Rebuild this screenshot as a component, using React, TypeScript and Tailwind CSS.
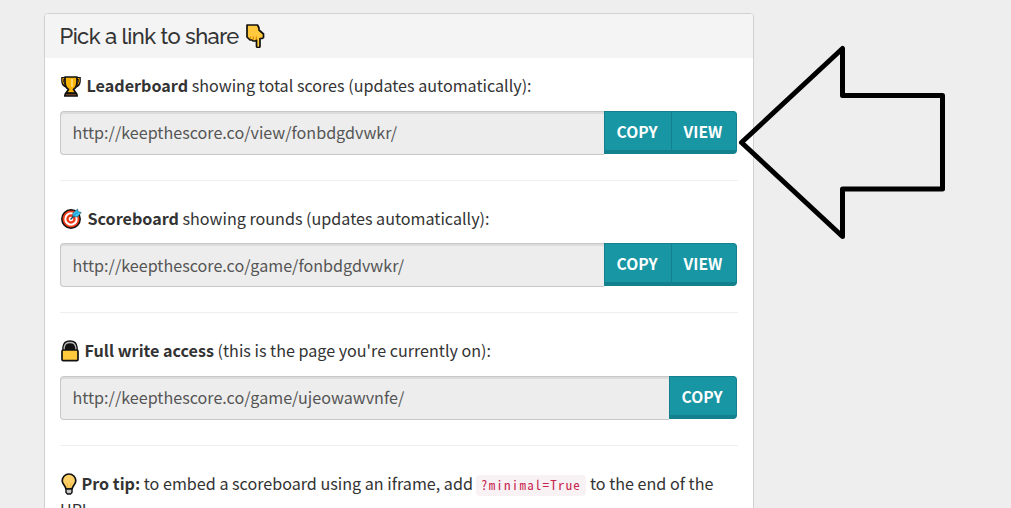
import type { ReactNode } from "react";

const outline = { stroke: "#111", strokeWidth: 1.7, strokeLinejoin: "round" as const };

function PointDown() {
  return (
    <svg className="ml-[7px] h-6 w-[19px] shrink-0" viewBox="0 0 19 24">
      <path d="M1 1h10.500l1.500 3v2l4.500 4v3.500L16 14.500h-2v8q-.3 1-1.200 1h-1q-1.300-.2-1.300-1.500V16l-1 1H7l-1-1H4L2.500 14.500 1 13z" fill="#ffc83d" {...outline} />
      <path d="M4.300 12.500v2.500M7.300 12.500v3.200M10.300 12.500v3" stroke="#d67d00" strokeWidth="1" fill="none" />
    </svg>
  );
}

function Trophy() {
  return (
    <svg className="ml-px h-[21px] w-5 shrink-0" viewBox="0 0 20 21">
      <path d="M5 2.500H1.700v3Q2 9.500 6 10.500M15 2.500h3.300v3Q18 9.500 14 10.500" fill="none" stroke="#111" strokeWidth="3" />
      <path d="M5 2.500H1.800v3Q2 9 6 9.800M15 2.500h3.200v3Q18 9 14 9.800" fill="none" stroke="#f7a900" strokeWidth="1" />
      <path d="M4 1h12v5q0 5-3.500 7.500L15 17H5l2.500-3.500Q4 11 4 6z" fill="#f9b406" {...outline} />
      <path d="M11 3v8" stroke="#ffdc70" strokeWidth="1.800" />
      <path d="M4.500 17.500h11l.7 2.500H3.800z" fill="#8b4d2c" {...outline} />
    </svg>
  );
}

function Target() {
  return (
    <svg className="ml-px h-[21px] w-[21px] shrink-0" viewBox="0 0 21 21">
      <circle cx="10" cy="11" r="9.200" fill="#f03a17" stroke="#111" strokeWidth="1.500" />
      <circle cx="10" cy="11" r="5.700" fill="none" stroke="#fff" strokeWidth="2" />
      <circle cx="10" cy="11" r="2.300" fill="#fff" />
      <path d="M9.500 11.500L15 6" stroke="#18445c" strokeWidth="1.500" />
      <path d="M11.500 8.500L12 5l4.500-4 .7 2.700 3 .8-3.700 4.500z" fill="#36c4f2" stroke="#174454" strokeWidth="0.600" />
      <path d="M12.500 8l4-4" stroke="#168bc1" strokeWidth="1" />
    </svg>
  );
}

function Lock() {
  return (
    <svg className="ml-px h-[22px] w-[18px] shrink-0" viewBox="0 0 18 22">
      <path d="M2 11V7.500Q2.500 1 9 1t7 6.500V11z" fill="#111" stroke="#111" strokeWidth="1.600" />
      <path d="M3.200 10V7.500Q3.700 2.500 9 2.500t5.800 5V10" fill="none" stroke="#b8b8b8" strokeWidth="1.300" />
      <rect x="1" y="10" width="16" height="10.700" rx="1.200" fill="#ffc83d" {...outline} />
    </svg>
  );
}

function Bulb() {
  return (
    <svg className="ml-px h-[22px] w-4 shrink-0" viewBox="0 0 16 22">
      <path d="M8 1a6.800 6.800 0 0 1 6.800 6.800c0 3.500-3.400 4.700-3.700 8.200H4.900C4.600 12.500 1.200 11.300 1.200 7.800A6.800 6.800 0 0 1 8 1z" fill="#ffd067" {...outline} />
      <path d="M6 10l1 5M10 10l-1 5" stroke="#f1ac31" strokeWidth="0.800" />
      <path d="M5 16h6v3.500L9.500 21h-3L5 19.500z" fill="#c9c9c9" stroke="#111" strokeWidth="1.400" />
    </svg>
  );
}

function ShareButton({ label, last }: { label: string; last?: boolean }) {
  return (
    <button
      className={`flex h-[43px] shrink-0 justify-center border border-b-4 border-[#13808d] bg-[#1896a4] pr-[2px] text-[15.650px] leading-[39px] font-bold text-white ${label === "COPY" ? "w-[68px]" : "-ml-px w-[66px]"} ${last ? "rounded-r-[4px]" : ""}`}
    >
      {label}
    </button>
  );
}

function LinkRow({ icon, name, note, url, buttons, height, low }: {
  icon: ReactNode; name: string; note: string; url: string; buttons: string[]; height: string; low?: boolean;
}) {
  return (
    <section className={height}>
      <div className="flex h-[26px] items-center whitespace-nowrap">
        {icon}
        <p className={`ml-[5.500px] leading-[26px] ${low ? "" : "-mt-0.5"}`}><strong>{name}</strong> {note}</p>
      </div>
      <div className="mt-3 flex h-11 w-[677px]">
        <div className={`min-w-0 flex-1 rounded-l-[4px] border border-r-0 border-[#c8c8c8] bg-[#ededed] pl-[11.500px] text-[#555] shadow-[inset_0_2px_0_#dcdcdc] ${low ? "leading-[42px]" : "leading-[40px]"}`}>
          {url}
        </div>
        {buttons.map((b, i) => (
          <ShareButton key={b} label={b} last={i === buttons.length - 1} />
        ))}
      </div>
      <hr className="mt-[25px] w-[678px] border-[#eee]" />
    </section>
  );
}

export default function App() {
  return (
    <div className="relative h-[508px] w-[1011px] overflow-hidden bg-[#eee] pt-[13px] pl-11 font-['Noto_Sans_CJK_SC','Source_Sans_Pro',sans-serif] text-[16.140px] text-[#333]">
      <main className="h-[600px] w-[710px] rounded-t-[4px] border border-[#d0d0d0] bg-white">
        <header className="flex h-11 items-center rounded-t-[3px] bg-[#f4f4f4] pl-[14.500px]">
          <h1 className="font-['Raleway','Lato',sans-serif] text-[22px] leading-6 font-medium tracking-[-0.580px] whitespace-nowrap">Pick a link to share</h1>
          <PointDown />
        </header>
        <div className="pt-[15px] pl-[15px]">
          <LinkRow icon={<Trophy />} name="Leaderboard" note="showing total scores (updates automatically):" url="http://keepthescore.co/view/fonbdgdvwkr/" buttons={["COPY", "VIEW"]} height="h-[132px]" />
          <LinkRow icon={<Target />} name="Scoreboard" note="showing rounds (updates automatically):" url="http://keepthescore.co/game/fonbdgdvwkr/" buttons={["COPY", "VIEW"]} height="h-[133px]" low />
          <LinkRow icon={<Lock />} name="Full write access" note="(this is the page you're currently on):" url="http://keepthescore.co/game/ujeowawvnfe/" buttons={["COPY"]} height="h-[133px]" />
          <div className="flex h-[26px] items-center whitespace-nowrap">
            <Bulb />
            <p className="-mt-0.5 ml-[4.500px] leading-[26px]"><strong>Pro tip:</strong> to embed a scoreboard using an iframe, add</p>
            <code className="mt-[2px] mr-1 ml-[3px] flex h-[21px] w-[110px] items-center rounded-[4px] bg-[#f9f2f4] px-[5px] font-['Noto_Sans_Mono_CJK_SC',monospace] text-[13px] tracking-[1.200px] text-[#c7254e]">?minimal=True</code>
            <p className="-mt-0.5 leading-[26px]">to the end of the</p>
          </div>
          <p className="-mt-px leading-[26px]">URL.</p>
        </div>
      </main>
      <svg className="pointer-events-none absolute top-0 left-0 h-[508px] w-[1011px]" viewBox="0 0 1011 508">
        <path d="M741.500 142.500L842.500 48.500V95.500H942.500V189H842.500V236.500Z" fill="none" stroke="#000" strokeWidth="5" strokeLinejoin="round" />
      </svg>
    </div>
  );
}
